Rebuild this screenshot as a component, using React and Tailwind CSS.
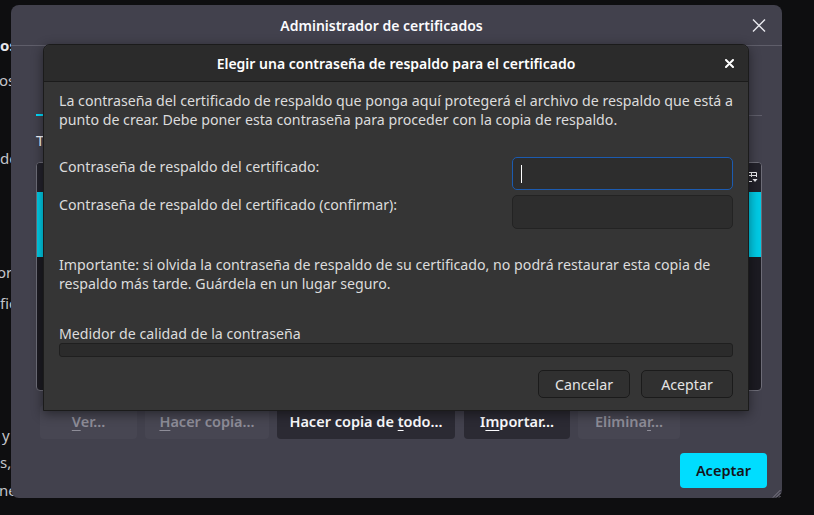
import React from "react";

const bgLines = [
    { text: "os", cls: "mt-[35px] font-bold text-[#e6e6ea]", ml: "ml-0" },
    { text: "os", cls: "mt-[15px]", ml: "ml-[-1px]" },
    { text: "de", cls: "mt-[58px]", ml: "ml-0" },
    { text: "ore", cls: "mt-[94px]", ml: "ml-[-3px]" },
    { text: "fic", cls: "mt-[11px]", ml: "ml-0" },
    { text: "y", cls: "mt-[112px]", ml: "ml-[2px]" },
    { text: "s,", cls: "mt-[7px]", ml: "ml-0" },
    { text: "ne", cls: "mt-[8px]", ml: "ml-[-1px]" },
];

const CloseThin = () => (
    <svg width="14" height="13" viewBox="0 0 14 13" className="shrink-0">
        <path d="M1 0.5 L13 12.5 M13 0.5 L1 12.5" stroke="#e8e8ee" strokeWidth="1.4" fill="none" />
    </svg>
);

const CloseBold = () => (
    <svg width="9" height="9" viewBox="0 0 9 9" className="shrink-0">
        <path d="M1 1 L8 8 M8 1 L1 8" stroke="#ffffff" strokeWidth="2" strokeLinecap="round" fill="none" />
    </svg>
);

const ColumnPicker = () => (
    <svg width="11" height="11" viewBox="0 0 11 11" className="shrink-0">
        <path d="M0.5 0.5 H9.5 V5 M0.5 0.5 V9.5 H5 M0.5 3.5 H9.5 M4.5 0.5 V5" stroke="#f0f0f4" strokeWidth="1" fill="none" />
        <path d="M5.5 7 H10.5 L8 10 Z" fill="#f0f0f4" />
    </svg>
);

const Grip = () => (
    <svg width="10" height="10" viewBox="0 0 10 10">
        <path d="M9.5 2 L2 9.5 M9.5 5 L5 9.5 M9.5 8 L8 9.5" stroke="#807f8a" strokeWidth="1" fill="none" />
    </svg>
);

const OuterButton = ({ w, disabled, children }) => (
    <div
        className={`${w} h-[34px] rounded-[4px] flex items-center justify-center text-[14.5px] font-semibold ${
            disabled ? "bg-[#474652] text-[#8e8d98]" : "bg-[#2b2a33] text-[#fbfbfe]"
        }`}
    >
        {children}
    </div>
);

export default function App() {
    return (
        <div className="relative w-[814px] h-[515px] overflow-hidden bg-[#0e0e10] font-['Noto_Sans',sans-serif] text-[15px]">
            {/* window behind the dialogs */}
            <div className="w-[24px] h-full overflow-hidden flex flex-col text-[#c4c4ca] leading-[20px]">
                {bgLines.map((l, i) => (
                    <div key={i} className={`${l.cls} ${l.ml} whitespace-nowrap`}>
                        {l.text}
                    </div>
                ))}
            </div>

            {/* certificate manager */}
            <div className="absolute left-[11px] top-[5px] w-[771px] h-[493px] rounded-[8px] bg-[#42414d] flex flex-col">
                <div className="h-[41px] border-b border-[#5f5e6a] flex items-center pr-[16px] shrink-0">
                    <div className="flex-1 text-center font-semibold text-[14px] text-[#fbfbfe]">
                        Administrador de certificados
                    </div>
                    <CloseThin />
                </div>

                <div className="flex flex-col pl-[25px] pr-[15px] flex-1">
                    <div className="mr-[5px] h-[70px] border-b border-[#5f5e6a] flex items-end">
                        <div className="w-[130px] h-[2px] bg-[#00ddff] mb-[-1px]" />
                    </div>

                    <div className="mt-[14px] leading-[20px] text-[#fbfbfe] whitespace-nowrap">
                        Tiene certificados
                    </div>

                    <div className="mt-[12px] mr-[5px] h-[229px] rounded-[4px] border border-[#6e6d78] bg-[#1c1b22] overflow-hidden flex flex-col">
                        <div className="h-[29px] bg-[#23222b] flex items-center justify-end pr-[3px] shrink-0">
                            <ColumnPicker />
                        </div>
                        <div className="h-[65px] bg-[#00cbe6]" />
                    </div>

                    <div className="mt-[14px] ml-[4px] flex gap-[8px]">
                        <OuterButton w="w-[97px]" disabled>
                            <span><span className="underline underline-offset-[3px]">V</span>er...</span>
                        </OuterButton>
                        <OuterButton w="w-[124px]" disabled>
                            <span><span className="underline underline-offset-[3px]">H</span>acer copia...</span>
                        </OuterButton>
                        <OuterButton w="w-[178px]">
                            <span>Hacer copia de <span className="underline underline-offset-[3px]">t</span>odo...</span>
                        </OuterButton>
                        <div className="ml-[1px] flex gap-[8px]">
                            <OuterButton w="w-[106px]">
                                <span>I<span className="underline underline-offset-[3px]">m</span>portar...</span>
                            </OuterButton>
                            <OuterButton w="w-[102px]" disabled>
                                <span>Elimina<span className="underline underline-offset-[3px]">r</span>...</span>
                            </OuterButton>
                        </div>
                    </div>

                    <div className="mt-[14px] flex justify-end">
                        <div className="w-[87px] h-[35px] rounded-[4px] bg-[#00ddff] flex items-center justify-center font-semibold text-[14.5px] text-[#15141a]">
                            Aceptar
                        </div>
                    </div>

                    <div className="flex-1 flex items-end justify-end mr-[-14px] pb-[1px]">
                        <Grip />
                    </div>
                </div>
            </div>

            {/* password dialog */}
            <div className="absolute left-[43px] top-[44px] w-[706px] h-[367px] rounded-t-[7px] border border-[#1b1b1b] bg-[#353535] shadow-[0_3px_12px_rgba(0,0,0,0.45)] flex flex-col text-[14.2px] text-[#dcdcdc]">
                <div className="h-[37px] shrink-0 bg-[#2b2b2b] border-b border-[#1b1b1b] rounded-t-[7px] flex items-center px-[14px]">
                    <div className="w-[9px]" />
                    <div className="flex-1 text-center font-semibold text-[14px] text-white">
                        Elegir una contraseña de respaldo para el certificado
                    </div>
                    <CloseBold />
                </div>

                <div className="flex flex-col px-[15px] pt-[9px] leading-[19px]">
                    <p>
                        La contraseña del certificado de respaldo que ponga aquí protegerá el archivo de respaldo que está a
                        <br />
                        punto de crear. Debe poner esta contraseña para proceder con la copia de respaldo.
                    </p>

                    <div className="mt-[28px] flex gap-[5px] flex-col">
                        <div className="flex items-start justify-between">
                            <span>Contraseña de respaldo del certificado:</span>
                            <div className="w-[221px] h-[33px] rounded-[5px] border border-[#1c5bb0] bg-[#2d2d2d] flex items-center pl-[8px]">
                                <div className="w-px h-[18px] bg-white" />
                            </div>
                        </div>
                        <div className="flex items-start justify-between">
                            <span>Contraseña de respaldo del certificado (confirmar):</span>
                            <div className="w-[221px] h-[34px] rounded-[5px] border border-[#232323] bg-[#2d2d2d]" />
                        </div>
                    </div>

                    <p className="mt-[26px]">
                        Importante: si olvida la contraseña de respaldo de su certificado, no podrá restaurar esta copia de
                        <br />
                        respaldo más tarde. Guárdela en un lugar seguro.
                    </p>

                    <div className="mt-[31px]">Medidor de calidad de la contraseña</div>
                    <div className="h-[14px] rounded-[3px] border border-[#1f1f1f] bg-[#2b2b2b]" />

                    <div className="mt-[13px] flex justify-end gap-[11px]">
                        <div className="w-[92px] h-[28px] rounded-[5px] border border-[#1b1b1b] bg-[#303030] flex items-center justify-center text-[#e4e4e4]">
                            Cancelar
                        </div>
                        <div className="w-[92px] h-[28px] rounded-[5px] border border-[#1b1b1b] bg-[#303030] flex items-center justify-center text-[#e4e4e4]">
                            Aceptar
                        </div>
                    </div>
                </div>
            </div>
        </div>
    );
}
